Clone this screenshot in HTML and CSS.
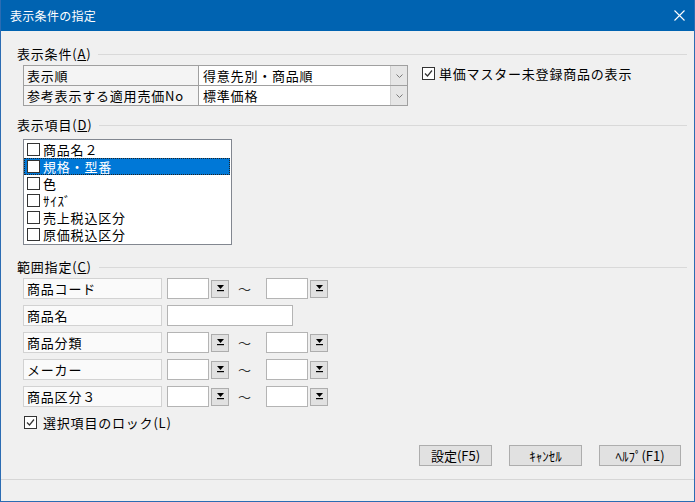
FILE: index.html
```html
<!DOCTYPE html>
<html lang="ja">
<head>
<meta charset="utf-8">
<title>表示条件の指定</title>
<link rel="stylesheet" href="styles.css">
</head>
<body>
<div class="window">
  <div class="titlebar">
    <span class="title">表示条件の指定</span>
    <svg class="close" width="11" height="11" viewBox="0 0 11 11"><path d="M0.5 0.5 L10.5 10.5 M10.5 0.5 L0.5 10.5" stroke="#fff" stroke-width="1.1" fill="none"/></svg>
  </div>
  <div class="content">
    <div class="group-head"><span class="group-title">表示条件(<u>A</u>)</span><div class="rule"></div></div>
    <div class="cond-row">
      <div class="cond-table">
        <div class="cell label-cell">表示順</div>
        <div class="cell combo"><span class="combo-text">得意先別・商品順</span><span class="drop"><svg width="7" height="4" viewBox="0 0 7 4"><polyline points="0.5,0.5 3.5,3.5 6.5,0.5" fill="none" stroke="#7a7a7a" stroke-width="1"/></svg></span></div>
        <div class="cell label-cell">参考表示する適用売価No</div>
        <div class="cell combo"><span class="combo-text">標準価格</span><span class="drop"><svg width="7" height="4" viewBox="0 0 7 4"><polyline points="0.5,0.5 3.5,3.5 6.5,0.5" fill="none" stroke="#7a7a7a" stroke-width="1"/></svg></span></div>
      </div>
      <div class="check top-check">
        <span class="box"><svg width="11" height="11" viewBox="0 0 11 11"><polyline points="2,5.5 4.5,8 9,2.5" fill="none" stroke="#333" stroke-width="1.2"/></svg></span>
        <span>単価マスター未登録商品の表示</span>
      </div>
    </div>

    <div class="group-head gh2"><span class="group-title">表示項目(<u>D</u>)</span><div class="rule"></div></div>
    <div class="listbox">
      <div class="item"><span class="box"></span><span class="item-text">商品名２</span></div>
      <div class="item selected"><span class="box"></span><span class="item-text">規格・型番</span></div>
      <div class="item"><span class="box"></span><span class="item-text">色</span></div>
      <div class="item"><span class="box"></span><span class="item-text">ｻｲｽﾞ</span></div>
      <div class="item"><span class="box"></span><span class="item-text">売上税込区分</span></div>
      <div class="item"><span class="box"></span><span class="item-text">原価税込区分</span></div>
    </div>

    <div class="group-head gh3"><span class="group-title">範囲指定(<u>C</u>)</span><div class="rule"></div></div>
    <div class="ranges">
      <div class="range-row">
        <div class="range-label">商品コード</div>
        <div class="field"></div><div class="pick"><svg width="7" height="7" viewBox="0 0 7 7"><polygon points="0,0 7,0 3.5,4" fill="#000"/><rect x="0" y="5" width="7" height="1.2" fill="#000"/></svg></div>
        <div class="tilde">～</div>
        <div class="field"></div><div class="pick"><svg width="7" height="7" viewBox="0 0 7 7"><polygon points="0,0 7,0 3.5,4" fill="#000"/><rect x="0" y="5" width="7" height="1.2" fill="#000"/></svg></div>
      </div>
      <div class="range-row">
        <div class="range-label">商品名</div>
        <div class="field wide"></div>
      </div>
      <div class="range-row">
        <div class="range-label">商品分類</div>
        <div class="field"></div><div class="pick"><svg width="7" height="7" viewBox="0 0 7 7"><polygon points="0,0 7,0 3.5,4" fill="#000"/><rect x="0" y="5" width="7" height="1.2" fill="#000"/></svg></div>
        <div class="tilde">～</div>
        <div class="field"></div><div class="pick"><svg width="7" height="7" viewBox="0 0 7 7"><polygon points="0,0 7,0 3.5,4" fill="#000"/><rect x="0" y="5" width="7" height="1.2" fill="#000"/></svg></div>
      </div>
      <div class="range-row">
        <div class="range-label">メーカー</div>
        <div class="field"></div><div class="pick"><svg width="7" height="7" viewBox="0 0 7 7"><polygon points="0,0 7,0 3.5,4" fill="#000"/><rect x="0" y="5" width="7" height="1.2" fill="#000"/></svg></div>
        <div class="tilde">～</div>
        <div class="field"></div><div class="pick"><svg width="7" height="7" viewBox="0 0 7 7"><polygon points="0,0 7,0 3.5,4" fill="#000"/><rect x="0" y="5" width="7" height="1.2" fill="#000"/></svg></div>
      </div>
      <div class="range-row">
        <div class="range-label">商品区分３</div>
        <div class="field"></div><div class="pick"><svg width="7" height="7" viewBox="0 0 7 7"><polygon points="0,0 7,0 3.5,4" fill="#000"/><rect x="0" y="5" width="7" height="1.2" fill="#000"/></svg></div>
        <div class="tilde">～</div>
        <div class="field"></div><div class="pick"><svg width="7" height="7" viewBox="0 0 7 7"><polygon points="0,0 7,0 3.5,4" fill="#000"/><rect x="0" y="5" width="7" height="1.2" fill="#000"/></svg></div>
      </div>
    </div>
    <div class="check lock-check">
      <span class="box"><svg width="11" height="11" viewBox="0 0 11 11"><polyline points="2,5.5 4.5,8 9,2.5" fill="none" stroke="#333" stroke-width="1.2"/></svg></span>
      <span>選択項目のロック(L)</span>
    </div>
    <div class="buttons">
      <div class="btn">設定(F5)</div>
      <div class="btn">ｷｬﾝｾﾙ</div>
      <div class="btn btn-wide">ﾍﾙﾌﾟ(F1)</div>
    </div>
  </div>
  <div class="status"></div>
</div>
</body>
</html>
```

FILE: styles.css
```css
html, body {
  margin: 0;
  padding: 0;
  background: #f0f0f0;
}
body {
  font-family: "Noto Sans CJK JP", "Liberation Sans", sans-serif;
  font-size: 13px;
  line-height: 15px;
  letter-spacing: 0.8px;
  color: #000;
}
.window {
  width: 695px;
  height: 502px;
  box-sizing: border-box;
  border: 1px solid #2b6cb3;
  border-top: 0;
  background: #f0f0f0;
  display: flex;
  flex-direction: column;
}
.titlebar {
  height: 31px;
  flex: none;
  background: #0063b1;
  color: #fff;
  font-size: 12px;
  letter-spacing: 0.3px;
  display: flex;
  align-items: center;
  justify-content: space-between;
  padding: 0 9px 0 9px;
}
.close { display: block; }
.content {
  flex: 1;
  padding: 16px 7px 0 16px;
  display: flex;
  flex-direction: column;
}
.group-head {
  display: flex;
  align-items: center;
  height: 14px;
  gap: 7px;
}
.group-title { line-height: 14px; white-space: nowrap; }
.group-title u { text-underline-offset: 1px; }
.rule {
  flex: 1;
  border-top: 1px solid #d9d9d9;
}
.gh2 { margin-top: 12px; }
.gh3 { margin-top: 15px; }

.cond-row {
  display: flex;
  align-items: flex-start;
  margin: 4px 0 0 6px;
}
.cond-table {
  display: grid;
  grid-template-columns: 175px 209px;
  border-top: 1px solid #a0a0a0;
  border-left: 1px solid #a0a0a0;
}
.cell {
  height: 19px;
  border-right: 1px solid #a0a0a0;
  border-bottom: 1px solid #a0a0a0;
  display: flex;
  align-items: center;
  white-space: nowrap;
  overflow: hidden;
}
.label-cell {
  background: #f4f4f4;
  padding-left: 3px;
}
.combo {
  background: #fff;
  padding-left: 4px;
}
.combo-text { flex: 1; }
.drop {
  width: 16px;
  height: 19px;
  background: #e6e6e6;
  border-left: 1px solid #cfcfcf;
  display: flex;
  align-items: center;
  justify-content: center;
}
.drop svg { display: block; }

.check {
  display: flex;
  align-items: center;
  white-space: nowrap;
}
.box {
  width: 11px;
  height: 11px;
  border: 1px solid #333;
  background: #fff;
  flex: none;
  display: block;
}
.box svg { display: block; }
.top-check {
  margin: 2px 0 0 14px;
  height: 13px;
  gap: 4px;
}

.listbox {
  margin: 7px 0 0 6px;
  width: 209px;
  height: 106px;
  box-sizing: border-box;
  border: 1px solid #828790;
  background: #fff;
  padding: 1px 1px 0 0;
}
.item {
  height: 17px;
  display: flex;
  align-items: center;
  gap: 3px;
  padding-left: 3px;
  white-space: nowrap;
}
.item-text { line-height: 15px; }
.item.selected {
  background: #0078d7;
  color: #fff;
  outline: 1px dotted #222;
  outline-offset: -1px;
}

.ranges {
  margin: 4px 0 0 6px;
  display: flex;
  flex-direction: column;
  gap: 6px;
}
.range-row {
  height: 21px;
  display: flex;
  align-items: center;
}
.range-label {
  width: 139px;
  height: 21px;
  box-sizing: border-box;
  border: 1px solid #d2d2d2;
  background: #fafafa;
  padding-left: 3px;
  display: flex;
  align-items: center;
  white-space: nowrap;
}
.field {
  width: 42px;
  height: 21px;
  box-sizing: border-box;
  border: 1px solid #b4b4b4;
  background: #fff;
  margin-left: 5px;
}
.field.wide { width: 126px; }
.pick {
  width: 18px;
  height: 18px;
  box-sizing: border-box;
  border: 1px solid #adadad;
  background: #e1e1e1;
  margin-left: 2px;
  display: flex;
  align-items: center;
  justify-content: center;
}
.pick svg { display: block; }
.tilde {
  width: 32px;
  text-align: center;
  color: #333;
}
.tilde + .field { margin-left: 5px; }

.lock-check {
  margin: 9px 0 0 7px;
  height: 13px;
  gap: 6px;
}

.buttons {
  margin-top: 16px;
  margin-right: 6px;
  display: flex;
  justify-content: flex-end;
  gap: 17px;
}
.btn {
  width: 73px;
  height: 21px;
  box-sizing: border-box;
  border: 1px solid #adadad;
  background: #e1e1e1;
  display: flex;
  align-items: center;
  justify-content: center;
  white-space: nowrap;
  letter-spacing: 0;
}
.btn-wide { width: 82px; }

.status {
  height: 21px;
  flex: none;
  border-top: 1px solid #d6d6d6;
}
```
